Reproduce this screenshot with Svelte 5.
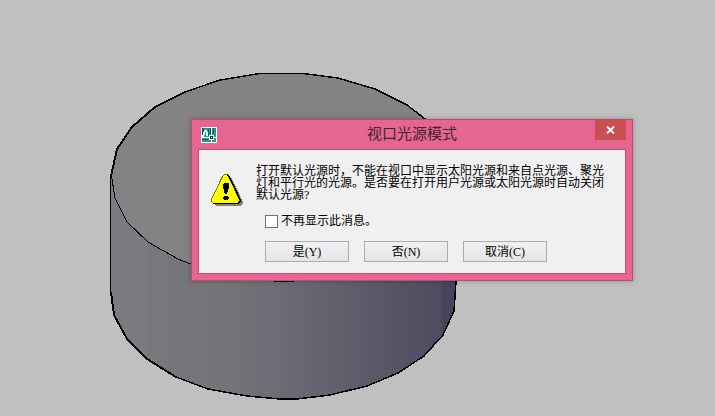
<script>
  let hideMessage = $state(false);
  let open = $state(true);
  const actions = ['是(Y)', '否(N)', '取消(C)'];
</script>

<main class="viewport">
  <svg class="model" width="715" height="416" viewBox="0 0 715 416" shape-rendering="crispEdges" aria-hidden="true">
    <defs>
      <linearGradient id="side" gradientUnits="userSpaceOnUse" x1="111" y1="320" x2="456" y2="320">
        <stop offset="0" stop-color="#7c7b80" />
        <stop offset=".105" stop-color="#7b7a7f" />
        <stop offset=".105" stop-color="#78777c" />
        <stop offset=".19" stop-color="#76767b" />
        <stop offset=".19" stop-color="#747578" />
        <stop offset=".35" stop-color="#727478" />
        <stop offset=".5" stop-color="#6a6b74" />
        <stop offset=".72" stop-color="#5d5c6a" />
        <stop offset=".96" stop-color="#4d4b5f" />
        <stop offset=".96" stop-color="#474659" />
        <stop offset="1" stop-color="#444357" />
      </linearGradient>
    </defs>
    <path fill="url(#side)" d="M111 176V292L114 315 127 339 147 359 176 377 208 389 247 396 280 399H297L330 395 367 386 398 373 424 356 443 335 454 311 456 281V176Z" />
    <path fill="#838385" d="M111 176L117 149 132 127 155 107 185 92 220 80 260 73H303L338 78 375 89 407 105 433 125 450 148 456 176 452 205 435 230 405 250 370 265 330 277 294 281H278L230 276 191 264 178 259 148 242 127 222 115 198Z" />
    <path fill="none" stroke="#000" d="M111.500 176L115 198 127 222 148 242 178 259 191 264 230 276 278 281.500H294" />
    <path fill="none" stroke="#000" stroke-width="1.500" d="M155 107L185 92 220 80 260 73.500H303L338 78 375 89 407 105 433 125M456 270V281L454 311 443 335 424 356 398 373 367 386 330 395 297 399H280L247 396 208 389 176 377" />
    <path fill="none" stroke="#000" stroke-width="2" d="M111 176L117 149 132 127 155 107M176 377L147 359 127 339 114 315 111 292" />
    <path fill="none" stroke="#000" d="M110.500 176V292" />
  </svg>

  {#if open}
    <div class="dialog" role="dialog" aria-labelledby="title">
      <header>
        <svg class="logo" width="16" height="16" viewBox="0 0 16 16" shape-rendering="crispEdges" aria-hidden="true">
          <path fill="#fff" d="M0 0h16v16H0z" />
          <path fill="#1a9e94" d="M1 1h14v14H1z" />
          <path fill="#0a5f60" d="M1 1h2v5H2v3H1zM7 2h1v7H7zM9 1h1v7H9zM12 1h1v6h-1zM1 12h6v1H1z" />
          <path fill="#e4f5f2" d="M3 3h3v2h1v4H5V5H4v3H3v2H1V8h1V5h1z" />
          <path fill="#fff" d="M10 1h1v7h2v2h2v1h-2v2h-2v2h-1v-2H8v-2H1v-1h7V8h2z" />
          <path fill="#063f43" d="M9 9h3v3H9z" />
          <path fill="#fff" d="M10 10h1v1h-1z" />
        </svg>
        <h1 id="title">视口光源模式</h1>
        <button class="close" aria-label="关闭" onclick={() => (open = false)}>
          <svg width="9" height="8" viewBox="0 0 9 8" aria-hidden="true"><path d="M1 .5 8 7.500M8 .5 1 7.500" stroke="#fff" stroke-width="1.800" /></svg>
        </button>
      </header>
      <section>
        <svg class="warning" width="33" height="33" viewBox="0 0 33 33" shape-rendering="crispEdges" aria-hidden="true">
          <defs><path id="sign" d="M13.500.5h2l2 2 10.500 22.500v2.500l-1.500 2h-24l-2-2V25l11-22.500z" /></defs>
          <use href="#sign" x="3" y="2" fill="#808080" stroke="#808080" />
          <use href="#sign" x="1" y="0" fill="#000" stroke="#000" />
          <use href="#sign" fill="#ff0" stroke="#808000" />
          <path d="M16 .5 18 3 29 25.500v2l-2 2H2" fill="none" stroke="#000" />
          <path fill="#000" d="M13 9h4l1 1v4l-1 2v1l-1 3h-2l-1-3v-1l-1-2v-4zM13 22h4v1h1v2h-1v1h-4v-1h-1v-2h1z" />
        </svg>
        <div class="content">
          <p>打开默认光源时，不能在视口中显示太阳光源和来自点光源、聚光灯和平行光的光源。是否要在打开用户光源或太阳光源时自动关闭默认光源?</p>
          <div class="controls">
            <label><input type="checkbox" bind:checked={hideMessage} />不再显示此消息。</label>
            <div class="actions">
              {#each actions as action}
                <button onclick={() => (open = false)}>{action}</button>
              {/each}
            </div>
          </div>
        </div>
      </section>
    </div>
  {/if}
</main>

<style>
  :global(body) { margin: 0; background: #c0c0c0; }
  .viewport {
    position: relative;
    min-height: 100vh;
    overflow: hidden;
    background: #c0c0c0;
    font-family: "Liberation Serif", "Noto Sans CJK SC", sans-serif;
    font-size: 12px;
    color: #000;
  }
  .model { position: absolute; left: 0; top: 0; }
  .dialog {
    position: absolute;
    left: 191px;
    top: 119px;
    box-sizing: border-box;
    width: 442px;
    padding: 0 6px 6px;
    border: 1px solid #b84f73;
    background: #e66690;
    box-shadow: 0 0 5px rgba(0, 0, 0, .25);
  }
  header {
    display: grid;
    grid-template-columns: 31px 1fr 31px;
    align-items: center;
    height: 29px;
  }
  .logo { margin-left: 3px; }
  h1 {
    margin: 0;
    text-align: center;
    font: 15px/26px "Noto Sans CJK SC", sans-serif;
    align-self: start;
    color: #3b2730;
  }
  .close {
    display: flex;
    align-items: center;
    justify-content: center;
    align-self: start;
    width: 31px;
    height: 20px;
    padding: 0;
    border: 0;
    background: #c75050;
  }
  section {
    display: flex;
    gap: 12px;
    padding: 15px 12px 11px;
    border: 1px solid #c0537a;
    background: #f0f0f0;
  }
  .warning { flex: none; margin-top: 9px; }
  .content { flex: 1; }
  p { width: 350px; margin: 0; line-height: 12px; }
  .controls { padding: 12px 0 0 9px; }
  label { display: flex; align-items: center; gap: 3px; height: 16px; line-height: 16px; }
  input {
    appearance: none;
    box-sizing: border-box;
    width: 13px;
    height: 13px;
    margin: 0;
    border: 1px solid #707070;
    background: #fff;
  }
  input:checked { box-shadow: inset 0 0 0 3px #fff; background: #222; }
  .actions { display: flex; gap: 15px; margin-top: 12px; }
  .actions button {
    box-sizing: border-box;
    width: 84px;
    height: 21px;
    padding: 0;
    border: 1px solid #acacac;
    background: linear-gradient(#f0f0f0, #e5e5e5);
    font: inherit;
    line-height: 18px;
    color: #000;
  }
</style>
